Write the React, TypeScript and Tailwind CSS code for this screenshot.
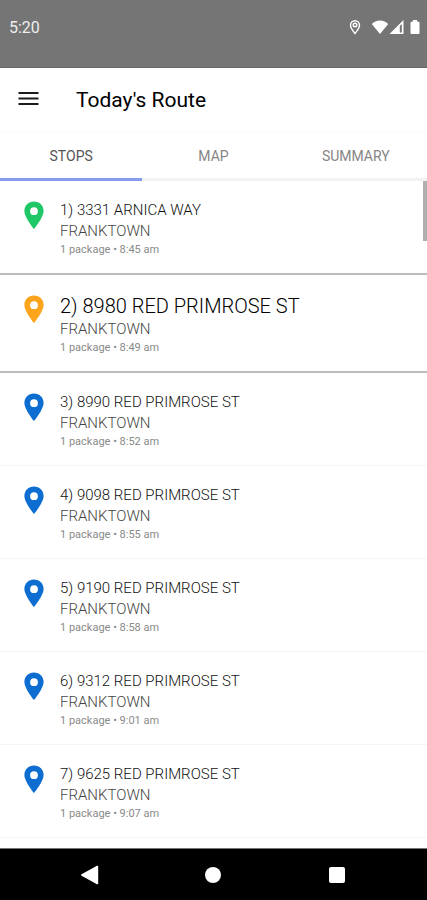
import React, { useState } from 'react';
import clsx from 'clsx';

type StopStatus = 'done' | 'current' | 'pending';

interface Stop {
  id: number;
  address: string;
  city: string;
  packages: number;
  eta: string;
  status: StopStatus;
}

const STOPS: Stop[] = [
  { id: 1, address: '3331 ARNICA WAY', city: 'FRANKTOWN', packages: 1, eta: '8:45 am', status: 'done' },
  { id: 2, address: '8980 RED PRIMROSE ST', city: 'FRANKTOWN', packages: 1, eta: '8:49 am', status: 'current' },
  { id: 3, address: '8990 RED PRIMROSE ST', city: 'FRANKTOWN', packages: 1, eta: '8:52 am', status: 'pending' },
  { id: 4, address: '9098 RED PRIMROSE ST', city: 'FRANKTOWN', packages: 1, eta: '8:55 am', status: 'pending' },
  { id: 5, address: '9190 RED PRIMROSE ST', city: 'FRANKTOWN', packages: 1, eta: '8:58 am', status: 'pending' },
  { id: 6, address: '9312 RED PRIMROSE ST', city: 'FRANKTOWN', packages: 1, eta: '9:01 am', status: 'pending' },
  { id: 7, address: '9625 RED PRIMROSE ST', city: 'FRANKTOWN', packages: 1, eta: '9:07 am', status: 'pending' },
];

const TABS = ['STOPS', 'MAP', 'SUMMARY'] as const;
type Tab = (typeof TABS)[number];

const PIN_COLORS: Record<StopStatus, string> = {
  done: 'text-[#1fc766]',
  current: 'text-[#fba41c]',
  pending: 'text-[#0d6dd1]',
};

function StatusBar() {
  return (
    <div className="flex h-17 shrink-0 items-start justify-between border-b border-[#666666] bg-[#757575] pt-4 pr-1.5 pl-2 text-white">
      <span className="pl-px text-base leading-6 text-[#eeeeee]">5:20</span>
      <div className="flex h-6 items-center pb-0.5">
        <svg className="mr-2.5 h-4 w-3" viewBox="0 0 12 16" fill="none" stroke="currentColor" strokeWidth="1.4">
          <path d="M6 14.5C3.2 11 1.5 8.6 1.5 6.2a4.5 4.5 0 0 1 9 0C10.5 8.6 8.8 11 6 14.5Z" />
          <circle cx="6" cy="6" r="1.8" />
        </svg>
        <svg className="h-4 w-[18px]" viewBox="0 0 18 16" fill="currentColor">
          <path d="M0.8 5C3 2.7 5.8 1.5 9 1.5s6 1.2 8.2 3.5L9 15Z" />
        </svg>
        <svg className="mr-1 h-4 w-4" viewBox="0 0 16 16" fill="currentColor">
          <path fillRule="evenodd" d="M0.5 15 14.5 1v14ZM10.8 7v6.5h2V5Z" />
        </svg>
        <svg className="h-4 w-3" viewBox="0 0 12 16" fill="currentColor">
          <path d="M4 1h4v1.3l2.5 1V14a1 1 0 0 1-1 1h-7a1 1 0 0 1-1-1V3.300l2.500-1Z" />
        </svg>
      </div>
    </div>
  );
}

function StopPin({ status }: { status: StopStatus }) {
  return (
    <svg className={clsx('h-7 w-5 shrink-0', PIN_COLORS[status])} viewBox="0 0 20 28" fill="currentColor">
      <path
        fillRule="evenodd"
        d="M10 0.5C4.5 0.5 0.4 4.6 0.4 9.9 0.4 16.5 10 28 10 28S19.6 16.5 19.6 9.9C19.6 4.6 15.5 0.5 10 0.5Zm0 5.8a3.9 3.9 0 1 1 0 7.8 3.9 3.9 0 0 1 0-7.8Z"
      />
    </svg>
  );
}

function StopRow({ stop }: { stop: Stop }) {
  const isCurrent = stop.status === 'current';

  return (
    <li
      className={clsx(
        'flex gap-4 px-6 pt-5 pb-4',
        stop.status === 'pending' ? 'border-b border-[#f5f5f5]' : 'border-b-2 border-[#bdbdbd]'
      )}
    >
      <StopPin status={stop.status} />
      <div className="min-w-0">
        <div
          className={clsx(
            'font-light',
            isCurrent ? 'text-xl leading-[22px] text-black' : 'text-[15px] leading-[18px] text-[#111111]'
          )}
        >
          {stop.id}) {stop.address}
        </div>
        <div className="text-[15px] leading-6 font-light text-[#444444]">{stop.city}</div>
        <div className="text-[11px] leading-[14px] text-[#8a8a8a]">
          {stop.packages} package • {stop.eta}
        </div>
      </div>
    </li>
  );
}

function NavigationBar() {
  return (
    <nav className="grid h-13 shrink-0 grid-cols-3 border-t border-[#757575] bg-black px-7 text-white">
      <button type="button" aria-label="Back" className="flex items-center justify-center">
        <svg className="h-5 w-5" viewBox="0 0 20 20" fill="currentColor">
          <path d="M1.5 9.3 17 0.8a0.8 0.8 0 0 1 1.2 0.7v17a0.8 0.8 0 0 1-1.2 0.7L1.5 10.7a0.8 0.8 0 0 1 0-1.4Z" />
        </svg>
      </button>
      <button type="button" aria-label="Home" className="flex items-center justify-center">
        <span className="size-4 rounded-full bg-white" />
      </button>
      <button type="button" aria-label="Recent apps" className="flex items-center justify-center">
        <span className="size-4 rounded-xs bg-white" />
      </button>
    </nav>
  );
}

export default function App() {
  const [activeTab, setActiveTab] = useState<Tab>('STOPS');

  return (
    <div className="flex h-screen flex-col bg-white font-[Roboto,sans-serif]">
      <StatusBar />

      <header className="flex h-16 shrink-0 items-center gap-9 px-4">
        <button type="button" aria-label="Open menu" className="flex size-6 items-center justify-center">
          <svg className="size-6" viewBox="0 0 24 24" stroke="#1c1c1c" strokeWidth="1.8">
            <path d="M2.5 5h20M2.5 10.5h20M2.5 16h20" />
          </svg>
        </button>
        <h1 className="text-[21px] leading-7 text-black">Today's Route</h1>
      </header>

      <div role="tablist" className="grid shrink-0 grid-cols-3 border-t border-[#fafafa]">
        {TABS.map((tab) => (
          <button
            key={tab}
            type="button"
            role="tab"
            aria-selected={activeTab === tab}
            onClick={() => setActiveTab(tab)}
            className={clsx(
              'h-12 border-b-3 text-sm',
              activeTab === tab ? 'border-[#879cec] text-[#555555]' : 'border-[#f2f2f2] text-[#858585]'
            )}
          >
            {tab}
          </button>
        ))}
      </div>

      <main className="relative min-h-0 flex-1">
        <ul className="h-full overflow-y-auto">
          {STOPS.map((stop) => (
            <StopRow key={stop.id} stop={stop} />
          ))}
        </ul>
        {/* overlay scroll thumb */}
        <div className="absolute top-0 right-0 h-15 w-1 bg-[#b0b0b0]" />
      </main>

      <NavigationBar />
    </div>
  );
}
